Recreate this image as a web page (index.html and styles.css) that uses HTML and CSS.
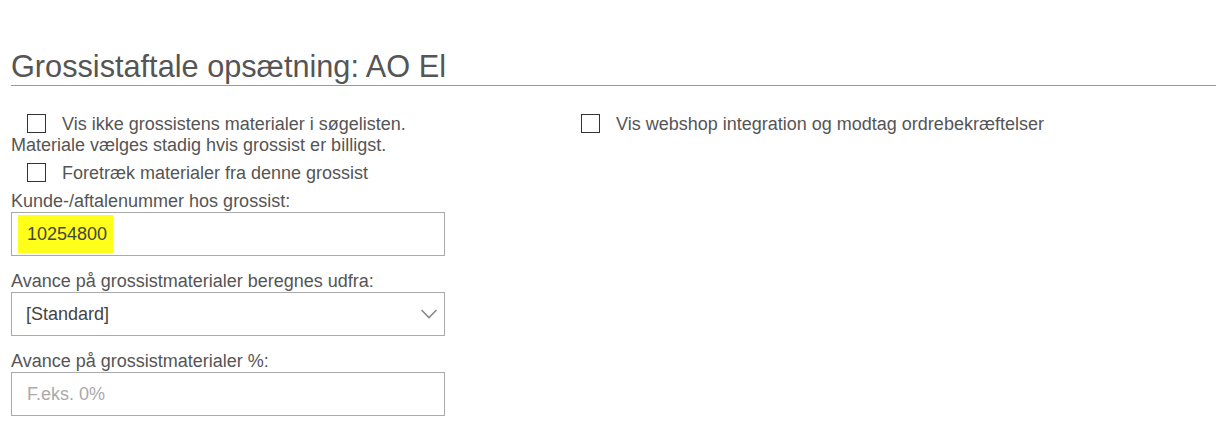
FILE: index.html
```html
<!DOCTYPE html>
<html lang="da">
<head>
    <meta charset="UTF-8">
    <meta name="viewport" content="width=device-width, initial-scale=1.0">
    <title>Grossistaftale opsætning</title>
    <link rel="stylesheet" href="styles.css">
</head>
<body>
    <h1 class="page-title">Grossistaftale opsætning: AO El</h1>

    <div class="settings">
        <div class="col">
            <label class="check">
                <input type="checkbox">
                Vis ikke grossistens materialer i søgelisten. Materiale vælges stadig hvis grossist er billigst.
            </label>
            <label class="check">
                <input type="checkbox">
                Foretræk materialer fra denne grossist
            </label>

            <div class="field">
                <label for="kundenr">Kunde-/aftalenummer hos grossist:</label>
                <input type="text" id="kundenr" class="control marked" value="10254800">
            </div>

            <div class="field">
                <label for="avance">Avance på grossistmaterialer beregnes udfra:</label>
                <div class="select-wrap">
                    <select id="avance" class="control">
                        <option>[Standard]</option>
                    </select>
                    <svg class="chevron" width="18" height="12" viewBox="0 0 18 12">
                        <path d="M1.5 2 L9 9.5 L16.5 2" fill="none" stroke="#8a8a8a" stroke-width="1.6"/>
                    </svg>
                </div>
            </div>

            <div class="field">
                <label for="procent">Avance på grossistmaterialer %:</label>
                <input type="text" id="procent" class="control" placeholder="F.eks. 0%">
            </div>
        </div>

        <div class="col">
            <label class="check">
                <input type="checkbox">
                Vis webshop integration og modtag ordrebekræftelser
            </label>
        </div>
    </div>
</body>
</html>
```

FILE: styles.css
```css
body {
    font-family: "Liberation Sans", Arial, sans-serif;
    font-size: 18px;
    line-height: 21px;
    color: #555;
    background-color: white;
    margin: 0;
    padding: 0 0 0 11px;
}
.page-title {
    font-size: 30.7px;
    font-weight: normal;
    line-height: 34px;
    margin: 50px 0 0 0;
    padding-bottom: 1px;
    border-bottom: 1px solid #999;
}
.settings {
    display: grid;
    grid-template-columns: 554px 1fr;
    margin-top: 28px;
}
.col {
    display: flex;
    flex-direction: column;
}
.col:first-child {
    width: 434px;
}
.check {
    display: block;
    margin-bottom: 7px;
}
.check input {
    -webkit-appearance: none;
    appearance: none;
    width: 19px;
    height: 19px;
    border: 1px solid #333;
    background: white;
    margin: 0 11px 0 16px;
    vertical-align: -3px;
}
.field {
    display: flex;
    flex-direction: column;
    margin-bottom: 15px;
}
.field label {
    margin-bottom: 0;
}
.control {
    font-family: "Liberation Sans", Arial, sans-serif;
    font-size: 18px;
    color: #444;
    height: 44px;
    box-sizing: border-box;
    border: 1px solid #aaa;
    padding: 0 15px;
    background-color: white;
    width: 100%;
    outline: none;
}
.control::placeholder {
    color: #aaa;
}
.marked {
    background-image: linear-gradient(#ffff1a, #ffff1a);
    background-repeat: no-repeat;
    background-size: 95px 38px;
    background-position: 6px 2px;
}
select.control {
    -webkit-appearance: none;
    appearance: none;
    padding-left: 14px;
}
.select-wrap {
    position: relative;
}
.chevron {
    position: absolute;
    right: 7px;
    top: 16px;
}
```
